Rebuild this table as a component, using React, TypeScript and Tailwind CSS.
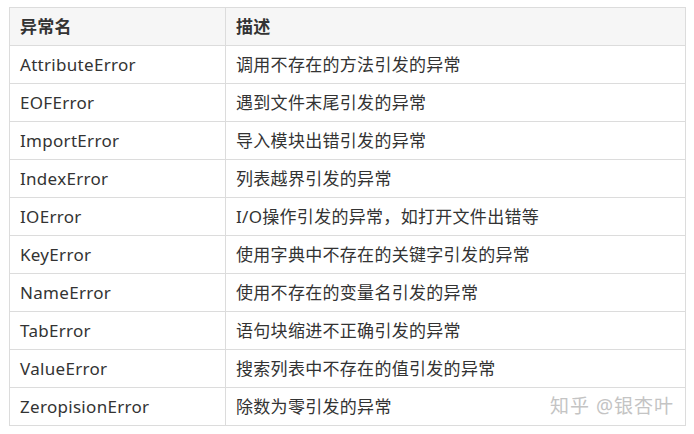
import React from 'react';

const rows: [string, string][] = [
  ['AttributeError', '调用不存在的方法引发的异常'],
  ['EOFError', '遇到文件末尾引发的异常'],
  ['ImportError', '导入模块出错引发的异常'],
  ['IndexError', '列表越界引发的异常'],
  ['IOError', 'I/O操作引发的异常，如打开文件出错等'],
  ['KeyError', '使用字典中不存在的关键字引发的异常'],
  ['NameError', '使用不存在的变量名引发的异常'],
  ['TabError', '语句块缩进不正确引发的异常'],
  ['ValueError', '搜索列表中不存在的值引发的异常'],
  ['ZeropisionError', '除数为零引发的异常'],
];

const font = { fontFamily: '"Noto Sans", "Noto Sans CJK SC", sans-serif' };

export default function App() {
  return (
    <div className="w-[694px] h-[434px] bg-white pt-[7px] pl-[9px]" style={font}>
      <div className="relative w-[677px]">
        <table className="w-full border-collapse text-[17px] tracking-[0.3px] text-[#333]">
          <thead>
            <tr className="h-[38px] bg-[#f6f6f6]">
              <th className="w-[216px] border border-[#dcdcdc] px-[10px] text-left font-bold">异常名</th>
              <th className="border border-[#dcdcdc] px-[10px] text-left font-bold">描述</th>
            </tr>
          </thead>
          <tbody>
            {rows.map(([name, desc]) => (
              <tr key={name} className="h-[38px]">
                <td className="border border-[#dcdcdc] px-[10px]">{name}</td>
                <td className="border border-[#dcdcdc] px-[10px]">{desc}</td>
              </tr>
            ))}
          </tbody>
        </table>
        {/* watermark */}
        <div className="absolute right-[12px] bottom-[6px] text-[19px] text-[#c4c4c4] tracking-[1px] [text-shadow:0_0_2px_#fff]">
          知乎 @银杏叶
        </div>
      </div>
    </div>
  );
}
